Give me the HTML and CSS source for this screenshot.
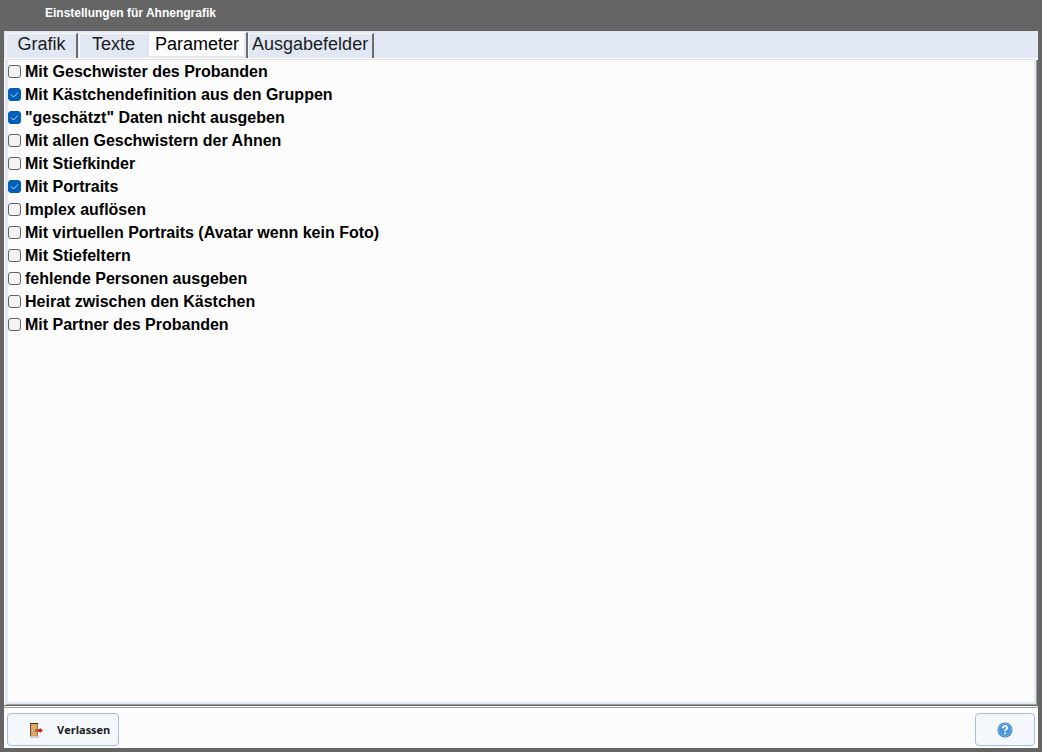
FILE: index.html
```html
<!DOCTYPE html>
<html lang="de">
<head>
<meta charset="utf-8">
<title>Einstellungen für Ahnengrafik</title>
<link rel="stylesheet" href="styles.css">
</head>
<body>
<div class="window">
  <header class="titlebar"><h1 class="title">Einstellungen für Ahnengrafik</h1></header>
  <main class="content">
    <div class="tabs" role="tablist">
      <button class="tab tab-short" role="tab" type="button">Grafik</button>
      <button class="tab tab-short tab-before" role="tab" type="button">Texte</button>
      <button class="tab tab-active" role="tab" type="button" aria-selected="true">Parameter</button>
      <button class="tab" role="tab" type="button">Ausgabefelder</button>
    </div>
    <section class="panel" role="tabpanel">
      <label class="option"><input class="check" type="checkbox">Mit Geschwister des Probanden</label>
      <label class="option"><input class="check" type="checkbox" checked>Mit Kästchendefinition aus den Gruppen</label>
      <label class="option"><input class="check" type="checkbox" checked>"geschätzt" Daten nicht ausgeben</label>
      <label class="option"><input class="check" type="checkbox">Mit allen Geschwistern der Ahnen</label>
      <label class="option"><input class="check" type="checkbox">Mit Stiefkinder</label>
      <label class="option"><input class="check" type="checkbox" checked>Mit Portraits</label>
      <label class="option"><input class="check" type="checkbox">Implex auflösen</label>
      <label class="option"><input class="check" type="checkbox">Mit virtuellen Portraits (Avatar wenn kein Foto)</label>
      <label class="option"><input class="check" type="checkbox">Mit Stiefeltern</label>
      <label class="option"><input class="check" type="checkbox">fehlende Personen ausgeben</label>
      <label class="option"><input class="check" type="checkbox">Heirat zwischen den Kästchen</label>
      <label class="option"><input class="check" type="checkbox">Mit Partner des Probanden</label>
    </section>
    <footer class="footer">
      <button class="button button-exit" type="button">
        <svg class="icon" width="16" height="16" viewBox="0 0 16 16" aria-hidden="true">
          <path d="M1 14h9v2H1z" fill="#c9cbcc"/>
          <path d="M1 1h8v13H1z" fill="#b07a44"/>
          <path d="M1 1h8v1H1z" fill="#4a2c18"/>
          <path d="M1 2h1v12H1z" fill="#7a5230"/>
          <path d="M2 2h6v12H2z" fill="#d6a064"/>
          <path d="M3 3h4v10H3z" fill="#dda96e"/>
          <path d="M6 7h4v3H6z" fill="#a8752c"/>
          <path d="M9 7h2V6l3 2.500L11 11v-1H9z" fill="#d8251f"/>
        </svg>
        Verlassen
      </button>
      <button class="button button-help" type="button" aria-label="Hilfe">
        <svg class="icon" width="16" height="16" viewBox="0 0 16 16" aria-hidden="true">
          <circle cx="8" cy="8" r="7.500" fill="#2d78bd"/>
          <circle cx="8" cy="8" r="6.300" fill="#4796dc" stroke="#8fc3ee" stroke-width=".8"/>
          <path d="M5.800 6.200C5.900 3.500 10.300 3.500 10.200 6.100C10.100 7.600 8 7.500 8 9.300" fill="none" stroke="#fff" stroke-width="1.700"/>
          <path d="M7.100 10.500h1.800v1.700H7.100z" fill="#fff"/>
        </svg>
      </button>
    </footer>
  </main>
</div>
</body>
</html>
```
FILE: styles.css
```css
* { box-sizing: border-box; }
body { margin: 0; font-family: "Liberation Sans", Arial, sans-serif; }
.window {
  display: flex;
  flex-direction: column;
  min-height: 100vh;
  padding: 0 4px 4px;
  background: #656565;
}
.titlebar { height: 31px; padding: 5px 41px; }
.title { margin: 0; font-size: 12px; line-height: 16px; font-weight: bold; color: #fff; }
.content { flex: 1; display: flex; flex-direction: column; background: #fcfcfc; }
.tabs { display: flex; height: 27px; padding-left: 2px; background: #e1e7f3; }
.tab {
  margin: 2px 1px 0 0;
  padding: 0 4px 4px 3px;
  border: 0 solid #fcfcfc;
  border-width: 1px 2px 0 1px;
  border-right-color: #6d6d6d;
  border-radius: 2px 0 0 0;
  background: #e1e7f3;
  font: 18px/20px "Liberation Sans", Arial, sans-serif;
  color: #1c1c1c;
}
.tab-short { width: 72px; padding-left: 4px; }
.tab-before { width: 70px; border-right-color: #e1e7f3; margin-right: 0; }
.tab-active {
  margin: 1px 0 0;
  padding: 0 7px 3px 5px;
  background: #fcfcfc;
  box-shadow: inset -2px -2px #e1e7f3;
  color: #000;
}
.panel {
  flex: 1;
  display: flex;
  flex-direction: column;
  align-items: flex-start;
  margin: 1px 2px 1px 1px;
  border: 0 solid #e1e7f3;
  border-width: 1px 2px 2px 3px;
  border-top-color: #e3e3e3;
  box-shadow: 1px 1px #a0a0a0, 2px 1px #656565;
  background: #fcfcfc;
}
.option {
  display: flex;
  align-items: center;
  gap: 4px;
  height: 23px;
  font-size: 16px;
  line-height: 18px;
  font-weight: bold;
  color: #000;
}
.check {
  appearance: none;
  width: 13px;
  height: 13px;
  margin: 0;
  border: 1px solid #626262;
  border-radius: 3px;
  background: #f3f3f3;
}
.check:checked {
  border-color: #005fb8;
  background: #005fb8 url("data:image/svg+xml,%3Csvg xmlns='http://www.w3.org/2000/svg' viewBox='0 0 11 11'%3E%3Cpath d='M2 5.500L4.500 8L9 3.500' fill='none' stroke='%23c4dcf2'/%3E%3C/svg%3E") center / 11px 11px no-repeat;
}
.footer {
  display: flex;
  justify-content: space-between;
  height: 43px;
  padding: 5px 3px 2px;
  border-top: 1px solid #656565;
  background: linear-gradient(#a0a0a0, #a0a0a0) 0 1px / 100% 1px no-repeat #fcfcfc;
}
.button {
  display: flex;
  align-items: center;
  height: 33px;
  margin-top: 2px;
  border: 1px solid #a3bfe0;
  border-radius: 4px;
  background: #f4f8fc;
  font: bold 11px/16px "Open Sans", "Noto Sans", sans-serif;
  color: #1a1a1a;
}
.button-exit { gap: 12px; width: 112px; padding: 0 0 0 21px; }
.button-help { justify-content: center; width: 60px; padding: 0; }
.icon { display: block; flex: none; }
```
